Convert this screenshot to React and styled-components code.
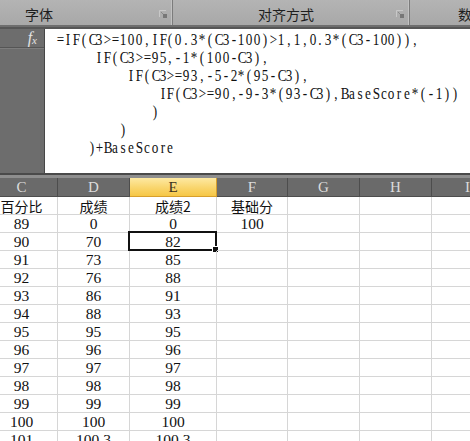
import React from 'react';
import styled, { createGlobalStyle } from 'styled-components';

const GlobalStyle = createGlobalStyle`
  html, body {
    margin: 0;
    padding: 0;
    background: #ffffff;
  }
  body {
    width: 470px;
    height: 441px;
    overflow: hidden;
  }
`;

const Window = styled.div`
  width: 470px;
  height: 441px;
  overflow: hidden;
  display: flex;
  flex-direction: column;
  background: #fff;
`;

/* ---------- ribbon ---------- */

const Ribbon = styled.div`
  display: flex;
  height: 25px;
  flex-shrink: 0;
  background: linear-gradient(180deg, #b4b4b4 0%, #a8a8a8 100%);
  border-bottom: 2px solid #6e6e6e;
`;

const Group = styled.div`
  display: flex;
  align-items: center;
  width: ${(p) => (p.width ? `${p.width}px` : 'auto')};
  flex: ${(p) => (p.width ? '0 0 auto' : '1 1 auto')};
  box-sizing: border-box;
  border-right: ${(p) => (p.width ? '1px solid #7c7c7c' : 'none')};
  box-shadow: ${(p) => (p.width ? 'inset -1px 0 0 #c2c2c2' : 'none')};
  padding-left: ${(p) => p.indent}px;
  padding-top: 2px;
  overflow: hidden;
`;

const GroupLabel = styled.span`
  font-family: 'Noto Sans CJK SC', 'Noto Sans', sans-serif;
  font-size: 14px;
  color: #1e1e1e;
  white-space: nowrap;
`;

const Launcher = styled.svg`
  margin-left: auto;
  margin-right: 5px;
  margin-top: 1px;
  flex-shrink: 0;
`;

function DialogLauncher() {
  return (
    <Launcher width="8" height="8" viewBox="0 0 8 8">
      <path d="M0.5 7V0.5H7" fill="none" stroke="#c8c8c8" strokeWidth="1" />
      <path d="M2 2L6 6" stroke="#8a8a8a" strokeWidth="1" />
      <rect x="4" y="4" width="4" height="4" fill="#777" />
    </Launcher>
  );
}

/* ---------- formula bar ---------- */

const FormulaBar = styled.div`
  display: flex;
  height: 146px;
  flex-shrink: 0;
  box-sizing: border-box;
  border-top: 2px solid #565656;
  background: #fff;
`;

const NameColumn = styled.div`
  width: 45px;
  flex-shrink: 0;
  box-sizing: border-box;
  background: #6d6d6d;
  border-right: 1px solid #474747;
  display: flex;
  flex-direction: column;
`;

const FxCell = styled.div`
  height: 19px;
  box-sizing: border-box;
  border-bottom: 1px solid #555;
  box-shadow: 0 1px 0 #7d7d7d;
  display: flex;
  align-items: center;
  justify-content: flex-end;
  padding-right: 7px;
  font-family: 'Liberation Serif', serif;
  font-style: italic;
  color: #e4e4e4;
  font-size: 16px;
  line-height: 1;
`;

const FxSub = styled.span`
  font-size: 11px;
  position: relative;
  top: 2px;
`;

const FormulaText = styled.div`
  flex: 1;
  padding: 2px 0 0 11px;
`;

const FormulaLine = styled.div`
  height: 18px;
  line-height: 18px;
  white-space: nowrap;
  font-family: 'Liberation Serif', 'Noto Sans CJK SC', serif;
  font-size: 16.5px;
  color: #111;
`;

const Glyph = styled.span`
  display: inline-block;
  width: 7.9px;
  text-align: center;
  transform: scaleX(0.8);
`;

const FORMULA = [
  '=IF(C3>=100,IF(0.3*(C3-100)>1,1,0.3*(C3-100)),',
  '     IF(C3>=95,-1*(100-C3),',
  '         IF(C3>=93,-5-2*(95-C3),',
  '             IF(C3>=90,-9-3*(93-C3),BaseScore*(-1))',
  '            )',
  '        )',
  '    )+BaseScore',
];

function MonoLine({ text }) {
  return (
    <FormulaLine>
      {text.split('').map((ch, i) => (
        <Glyph key={i}>{ch === ' ' ? '\u00a0' : ch}</Glyph>
      ))}
    </FormulaLine>
  );
}

/* ---------- sheet ---------- */

const Divider = styled.div`
  height: 5px;
  flex-shrink: 0;
  box-sizing: border-box;
  border-top: 2px solid #4a4a4a;
  background: #8e8e8e;
`;

const Sheet = styled.div`
  flex: 1;
  overflow: hidden;
`;

const COLS = [
  { key: 'C', width: 72 },
  { key: 'D', width: 72 },
  { key: 'E', width: 87 },
  { key: 'F', width: 71 },
  { key: 'G', width: 72 },
  { key: 'H', width: 72 },
  { key: 'I', width: 72 },
];

const Grid = styled.div`
  display: grid;
  grid-template-columns: ${COLS.map((c) => `${c.width}px`).join(' ')};
  grid-auto-rows: 18px;
  grid-template-rows: 19px;
  margin-left: -14px;
  width: max-content;
`;

const ColHeader = styled.div`
  box-sizing: border-box;
  display: flex;
  align-items: center;
  justify-content: center;
  font-family: 'Liberation Serif', serif;
  font-size: 15px;
  color: ${(p) => (p.active ? '#3a3020' : '#dcdcdc')};
  background: ${(p) =>
    p.active ? 'linear-gradient(180deg, #fde9a2 0%, #f9d56c 55%, #f6c746 100%)' : '#6a6a6a'};
  border-right: 1px solid ${(p) => (p.active ? '#d79f2c' : '#4d4d4d')};
  border-bottom: 1px solid ${(p) => (p.active ? '#d79f2c' : '#4d4d4d')};
  padding-top: 1px;
`;

const Cell = styled.div`
  position: relative;
  box-sizing: border-box;
  border-right: 1px solid #d6d6d6;
  border-bottom: 1px solid #d6d6d6;
  display: flex;
  align-items: center;
  justify-content: center;
  font-family: ${(p) =>
    p.cjk ? "'Noto Sans CJK SC', 'Noto Sans', sans-serif" : "'Liberation Serif', serif"};
  font-size: ${(p) => (p.cjk ? '14px' : '15.5px')};
  color: #111;
  padding-top: 1px;
  white-space: nowrap;
`;

const Selection = styled.div`
  position: absolute;
  top: -2px;
  left: -2px;
  right: -1px;
  bottom: -1px;
  border: 2px solid #111;
  pointer-events: none;
`;

const FillHandle = styled.div`
  position: absolute;
  right: -4px;
  bottom: -4px;
  width: 5px;
  height: 5px;
  background: #111;
  border: 1px solid #fff;
`;

const ROWS = [
  ['百分比', '成绩', '成绩2', '基础分'],
  ['89', '0', '0', '100'],
  ['90', '70', '82'],
  ['91', '73', '85'],
  ['92', '76', '88'],
  ['93', '86', '91'],
  ['94', '88', '93'],
  ['95', '95', '95'],
  ['96', '96', '96'],
  ['97', '97', '97'],
  ['98', '98', '98'],
  ['99', '99', '99'],
  ['100', '100', '100'],
  ['101', '100.3', '100.3'],
];

const isCjk = (s) => /[\u4e00-\u9fff]/.test(s);

export default function App() {
  return (
    <Window>
      <GlobalStyle />
      <Ribbon>
        <Group width={173} indent={25}>
          <GroupLabel>字体</GroupLabel>
          <DialogLauncher />
        </Group>
        <Group width={237} indent={85}>
          <GroupLabel>对齐方式</GroupLabel>
          <DialogLauncher />
        </Group>
        <Group indent={48}>
          <GroupLabel>数字</GroupLabel>
        </Group>
      </Ribbon>

      <FormulaBar>
        <NameColumn>
          <FxCell>
            f<FxSub>x</FxSub>
          </FxCell>
        </NameColumn>
        <FormulaText>
          {FORMULA.map((line, i) => (
            <MonoLine key={i} text={line} />
          ))}
        </FormulaText>
      </FormulaBar>

      <Divider />

      <Sheet>
        <Grid>
          {COLS.map((c) => (
            <ColHeader key={c.key} active={c.key === 'E'}>
              {c.key}
            </ColHeader>
          ))}
          {ROWS.map((row, r) =>
            COLS.map((c, ci) => {
              const value = row[ci] || '';
              const selected = r === 2 && c.key === 'E';
              return (
                <Cell key={`${r}-${c.key}`} cjk={isCjk(value)}>
                  {value}
                  {selected && (
                    <Selection>
                      <FillHandle />
                    </Selection>
                  )}
                </Cell>
              );
            })
          )}
        </Grid>
      </Sheet>
    </Window>
  );
}
